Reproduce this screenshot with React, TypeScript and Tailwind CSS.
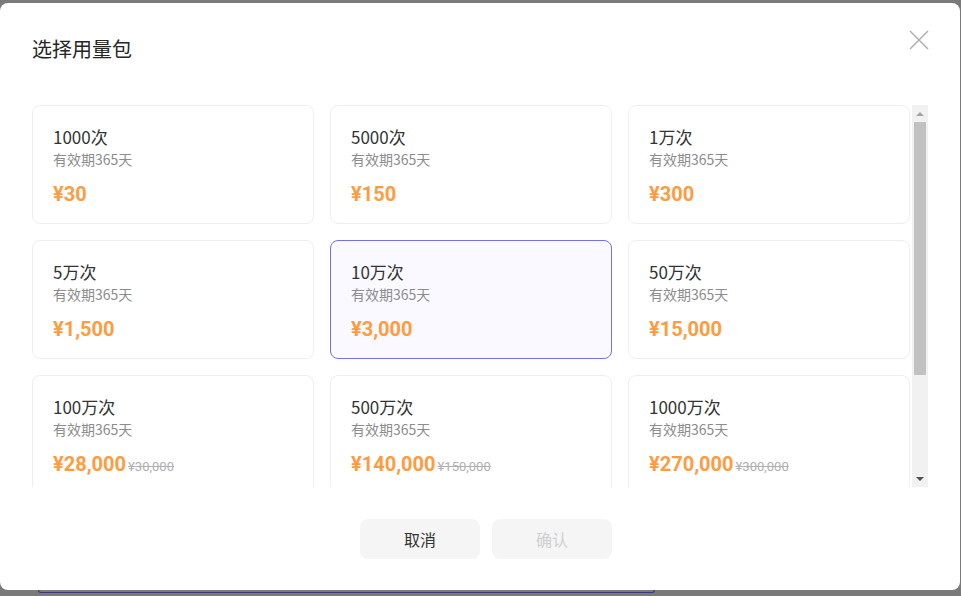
type Pack = {
  name: string
  price: string
  original?: string
}

const packs: Pack[] = [
  { name: "1000次", price: "¥30" },
  { name: "5000次", price: "¥150" },
  { name: "1万次", price: "¥300" },
  { name: "5万次", price: "¥1,500" },
  { name: "10万次", price: "¥3,000" },
  { name: "50万次", price: "¥15,000" },
  { name: "100万次", price: "¥28,000", original: "¥30,000" },
  { name: "500万次", price: "¥140,000", original: "¥150,000" },
  { name: "1000万次", price: "¥270,000", original: "¥300,000" },
]

function PackCard({ pack, selected }: { pack: Pack; selected: boolean }) {
  return (
    <div
      className={
        selected
          ? "h-[119px] rounded-lg border border-[#7272ee] bg-[#faf9ff] px-5 pt-[19px]"
          : "h-[119px] rounded-lg border border-[#eeeeee] bg-white px-5 pt-[19px]"
      }
    >
      <div className="text-[17px] leading-6 text-[#333]">{pack.name}</div>
      <div className="text-[14px] leading-5 text-[#8c8c8c]">有效期365天</div>
      <div className="mt-[11px] flex items-baseline gap-[2px]">
        <span className="font-['Roboto','Noto_Sans_CJK_SC',sans-serif] text-[20px] leading-7 font-bold text-[#fd9c40]">
          {pack.price}
        </span>
        {pack.original && (
          <span className="font-['Roboto','Noto_Sans_CJK_SC',sans-serif] text-[13px] text-[#b0b0b0] line-through">
            {pack.original}
          </span>
        )}
      </div>
    </div>
  )
}

// classic scrollbar, drawn since the headless browser hides its own
function ScrollBar() {
  return (
    <div className="ml-[2px] flex h-[382px] w-[16px] flex-col items-center bg-[#f1f1f1]">
      <div className="flex h-[17px] items-center justify-center">
        <div className="h-0 w-0 border-x-[4px] border-b-[4px] border-x-transparent border-b-[#a3a3a3]" />
      </div>
      <div className="h-[253px] w-[12px] bg-[#c1c1c1]" />
      <div className="flex-1" />
      <div className="flex h-[17px] items-center justify-center">
        <div className="h-0 w-0 border-x-[4px] border-t-[4px] border-x-transparent border-t-[#505050]" />
      </div>
    </div>
  )
}

export default function App() {
  return (
    <div className="h-[596px] w-[961px] overflow-hidden bg-[#7a7a7a] pt-[3px] font-['Noto_Sans_CJK_SC',sans-serif]">
      <div className="relative flex h-[587px] w-[960px] flex-col rounded-lg bg-white">
        <button className="absolute top-[27px] right-[31px]">
          <svg width="20" height="20" viewBox="0 0 20 20" fill="none" stroke="#ababab" strokeWidth="1.4">
            <path d="M1 1L19 19M19 1L1 19" />
          </svg>
        </button>

        <div className="px-8 pt-8 text-[20px] leading-7 text-[#262626]">选择用量包</div>

        {/* Pack list */}
        <div className="mx-8 mt-[42px] flex h-[382px]">
          <div className="h-[382px] w-[878px] overflow-hidden">
            <div className="grid grid-cols-3 gap-4">
              {packs.map((pack, i) => (
                <PackCard key={pack.name} pack={pack} selected={i === 4} />
              ))}
            </div>
          </div>
          <ScrollBar />
        </div>

        <div className="mt-8 flex justify-center gap-3 pl-3">
          <button className="h-10 w-[120px] rounded-lg bg-[#f5f5f5] text-[16px] text-[#333]">取消</button>
          <button className="h-10 w-[120px] rounded-lg bg-[#f5f5f5] text-[16px] text-[#cfcfcf]">确认</button>
        </div>
      </div>
      <div className="ml-[38px] h-[3px] w-[617px] rounded-b-[4px] border-x border-b border-[#3a3a80]" />
    </div>
  )
}
